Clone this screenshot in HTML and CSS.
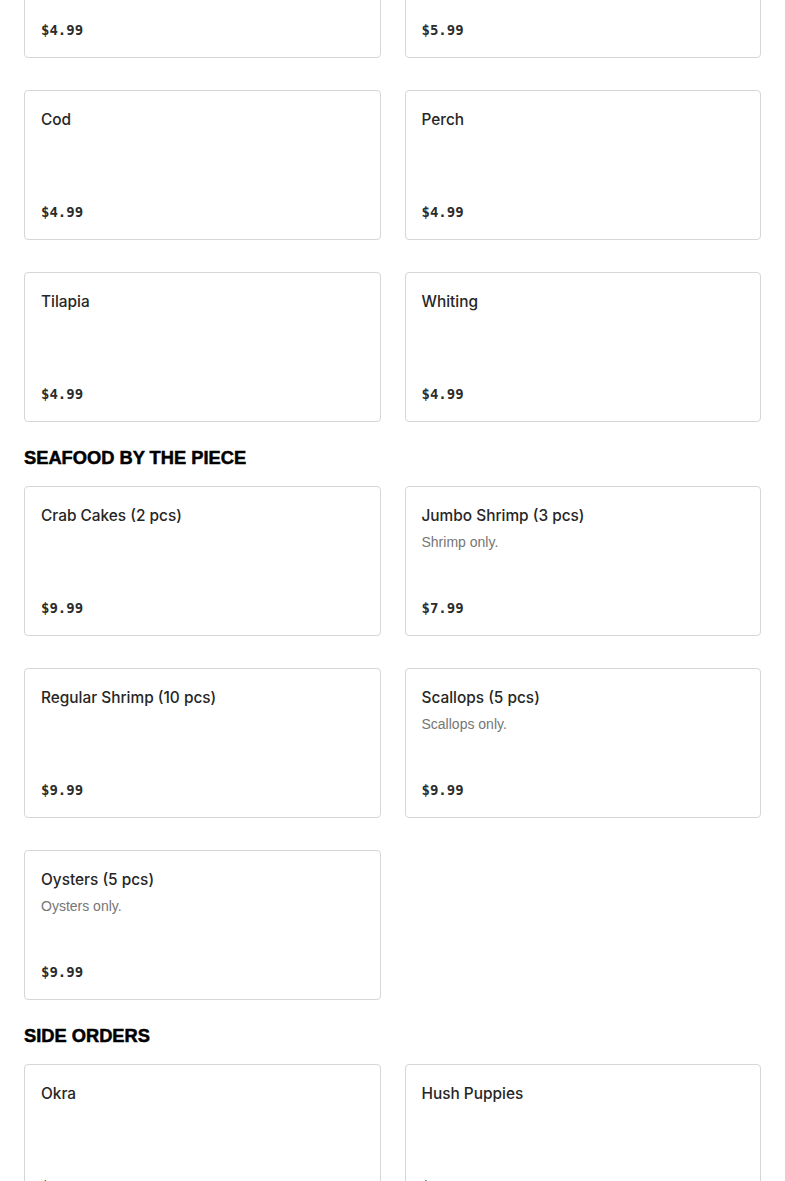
FILE: index.html
```html
<!DOCTYPE html>
<html lang="en">
<head>
<meta charset="utf-8">
<title>Menu</title>
<link rel="stylesheet" href="styles.css">
</head>
<body>
<main class="menu">
  <section class="section section-first">
    <div class="grid">
      <div class="card"><div class="title">Catfish</div><div class="price">$4.99</div></div>
      <div class="card"><div class="title">Salmon</div><div class="price">$5.99</div></div>
      <div class="card"><div class="title">Cod</div><div class="price">$4.99</div></div>
      <div class="card"><div class="title">Perch</div><div class="price">$4.99</div></div>
      <div class="card"><div class="title">Tilapia</div><div class="price">$4.99</div></div>
      <div class="card"><div class="title">Whiting</div><div class="price">$4.99</div></div>
    </div>
  </section>
  <section class="section">
    <h2 class="heading">SEAFOOD BY THE PIECE</h2>
    <div class="grid">
      <div class="card"><div class="title">Crab Cakes (2 pcs)</div><div class="price">$9.99</div></div>
      <div class="card"><div class="title">Jumbo Shrimp (3 pcs)</div><div class="desc">Shrimp only.</div><div class="price">$7.99</div></div>
      <div class="card"><div class="title">Regular Shrimp (10 pcs)</div><div class="price">$9.99</div></div>
      <div class="card"><div class="title">Scallops (5 pcs)</div><div class="desc">Scallops only.</div><div class="price">$9.99</div></div>
      <div class="card"><div class="title">Oysters (5 pcs)</div><div class="desc">Oysters only.</div><div class="price">$9.99</div></div>
    </div>
  </section>
  <section class="section">
    <h2 class="heading">SIDE ORDERS</h2>
    <div class="grid">
      <div class="card"><div class="title">Okra</div><div class="price">$3.99</div></div>
      <div class="card"><div class="title">Hush Puppies</div><div class="price">$2.99</div></div>
    </div>
  </section>
</main>
</body>
</html>
```

FILE: styles.css
```css
* { box-sizing: border-box; }
html, body { margin: 0; padding: 0; background: #fff; }
body {
  font-family: "Liberation Sans", Arial, sans-serif;
  color: #2b2b2b;
}
.menu {
  padding: 0 24px 40px;
}
.section-first {
  margin-top: -92px;
}
.heading {
  margin: 24px 0 16px;
  font-family: "Liberation Sans", Arial, sans-serif;
  font-size: 18.3px;
  line-height: 24px;
  font-weight: 700;
  color: #000;
  -webkit-text-stroke: 0.5px #000;
  letter-spacing: 0;
}
.grid {
  display: grid;
  grid-template-columns: 1fr 1fr;
  gap: 32px 24px;
}
.card {
  display: flex;
  flex-direction: column;
  min-height: 150px;
  padding: 17px 16px 16px;
  border: 1px solid #d6d6d6;
  border-radius: 4px;
  background: #fff;
}
.title {
  font-family: "Inter", "Liberation Sans", sans-serif;
  font-size: 15.4px;
  line-height: 24px;
  font-weight: 500;
  color: #262626;
}
.desc {
  margin-top: 4px;
  font-family: "Liberation Sans", Arial, sans-serif;
  font-size: 14px;
  line-height: 20px;
  color: #767676;
}
.price {
  margin-top: auto;
  font-family: "DejaVu Sans Mono", "Liberation Mono", monospace;
  font-size: 14px;
  line-height: 22px;
  font-weight: 700;
  color: #2b2b2b;
}
```
